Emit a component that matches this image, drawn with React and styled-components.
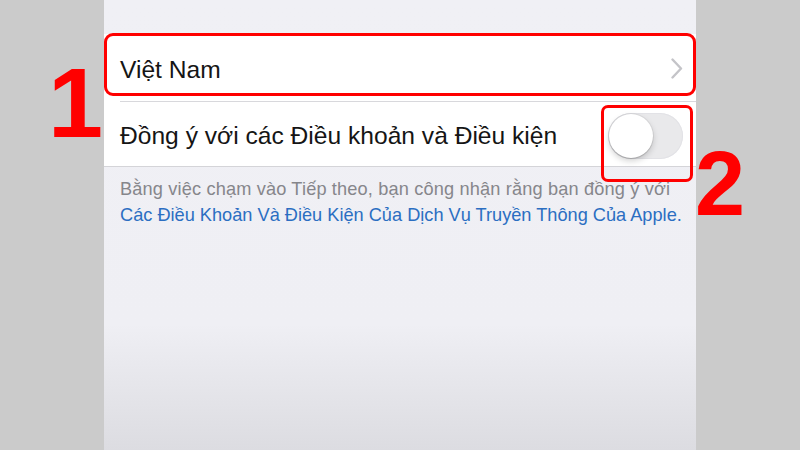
import React from 'react';
import styled, { createGlobalStyle } from 'styled-components';

const GlobalStyle = createGlobalStyle`
  html, body {
    margin: 0;
    padding: 0;
    background: #cbcbcb;
  }
  body {
    font-family: "Liberation Sans", Arial, sans-serif;
  }
`;

const Page = styled.div`
  position: relative;
  width: 800px;
  height: 450px;
  display: flex;
  overflow: hidden;
  background: #cbcbcb;
`;

const Side = styled.div`
  width: 104px;
  flex-shrink: 0;
`;

const Phone = styled.div`
  width: 592px;
  display: flex;
  flex-direction: column;
  background: linear-gradient(to bottom, #f0f0f5 0%, #efeff4 72%, #dcdce1 100%);
`;

const TopSpace = styled.div`
  height: 34px;
`;

const Group = styled.div`
  background: #ffffff;
  border-bottom: 1px solid #d4d4d8;
`;

const Row = styled.div`
  height: ${props => props.h}px;
  display: flex;
  align-items: center;
  justify-content: space-between;
  padding: 0 13px 0 16px;
  position: relative;
  &::after {
    content: '';
    display: ${props => props.divider ? 'block' : 'none'};
    position: absolute;
    left: 16px;
    right: 0;
    bottom: 0;
    height: 1px;
    background: #d8d8dc;
  }
`;

const Label = styled.span`
  font-size: 24.6px;
  color: #151515;
  padding-top: 3px;
`;

const Chevron = () => (
  <svg width="12" height="21" viewBox="0 0 12 21">
    <path d="M1.5 1.5 L10 10.5 L1.5 19.5" fill="none" stroke="#c4c4c8" strokeWidth="2.4" strokeLinecap="round" strokeLinejoin="round" />
  </svg>
);

const Track = styled.div`
  width: 75px;
  height: 46px;
  border-radius: 23px;
  background: #e9e9eb;
  box-shadow: inset 0 0 0 1px #e2e2e6;
  position: relative;
  margin-top: 4px;
`;

const Knob = styled.div`
  position: absolute;
  top: 1px;
  left: 1px;
  width: 44px;
  height: 44px;
  border-radius: 50%;
  background: #ffffff;
  box-shadow: 0 3px 6px rgba(0, 0, 0, 0.18), 0 1px 1px rgba(0, 0, 0, 0.12), 0 0 0 1px rgba(0, 0, 0, 0.05);
`;

const Footer = styled.div`
  padding: 9px 0 0 16px;
  font-size: 18.2px;
  line-height: 26px;
  white-space: nowrap;
  color: #86868b;
`;

const Note = styled.div`
  letter-spacing: 0.15px;
`;

const Link = styled.div`
  color: #2b6ec2;
`;

const Mark = styled.div`
  position: absolute;
  left: ${props => props.x}px;
  top: ${props => props.y}px;
  width: ${props => props.w}px;
  height: ${props => props.h}px;
  border: 3px solid #ff0000;
  border-radius: ${props => props.r}px;
  box-sizing: border-box;
`;

const Digit = styled.div`
  position: absolute;
  left: ${props => props.x}px;
  top: ${props => props.y}px;
  font-family: "Liberation Sans", Arial, sans-serif;
  font-weight: 700;
  font-size: ${props => props.size}px;
  line-height: 1;
  color: #ff0000;
`;

export default function App() {
  return (
    <>
      <GlobalStyle />
      <Page>
        <Side />
        <Phone>
          <TopSpace />
          <Group>
            <Row h={68} divider>
              <Label>Việt Nam</Label>
              <Chevron />
            </Row>
            <Row h={64}>
              <Label>Đồng ý với các Điều khoản và Điều kiện</Label>
              <Track>
                <Knob />
              </Track>
            </Row>
          </Group>
          <Footer>
            <Note>Bằng việc chạm vào Tiếp theo, bạn công nhận rằng bạn đồng ý với</Note>
            <Link>Các Điều Khoản Và Điều Kiện Của Dịch Vụ Truyền Thông Của Apple.</Link>
          </Footer>
        </Phone>
        <Side />
        <Mark x={104} y={33} w={592} h={63} r={9} />
        <Mark x={601} y={105} w={92} h={77} r={7} />
        <Digit x={48} y={53} size={99}>1</Digit>
        <Digit x={695} y={139} size={90}>2</Digit>
      </Page>
    </>
  );
}
